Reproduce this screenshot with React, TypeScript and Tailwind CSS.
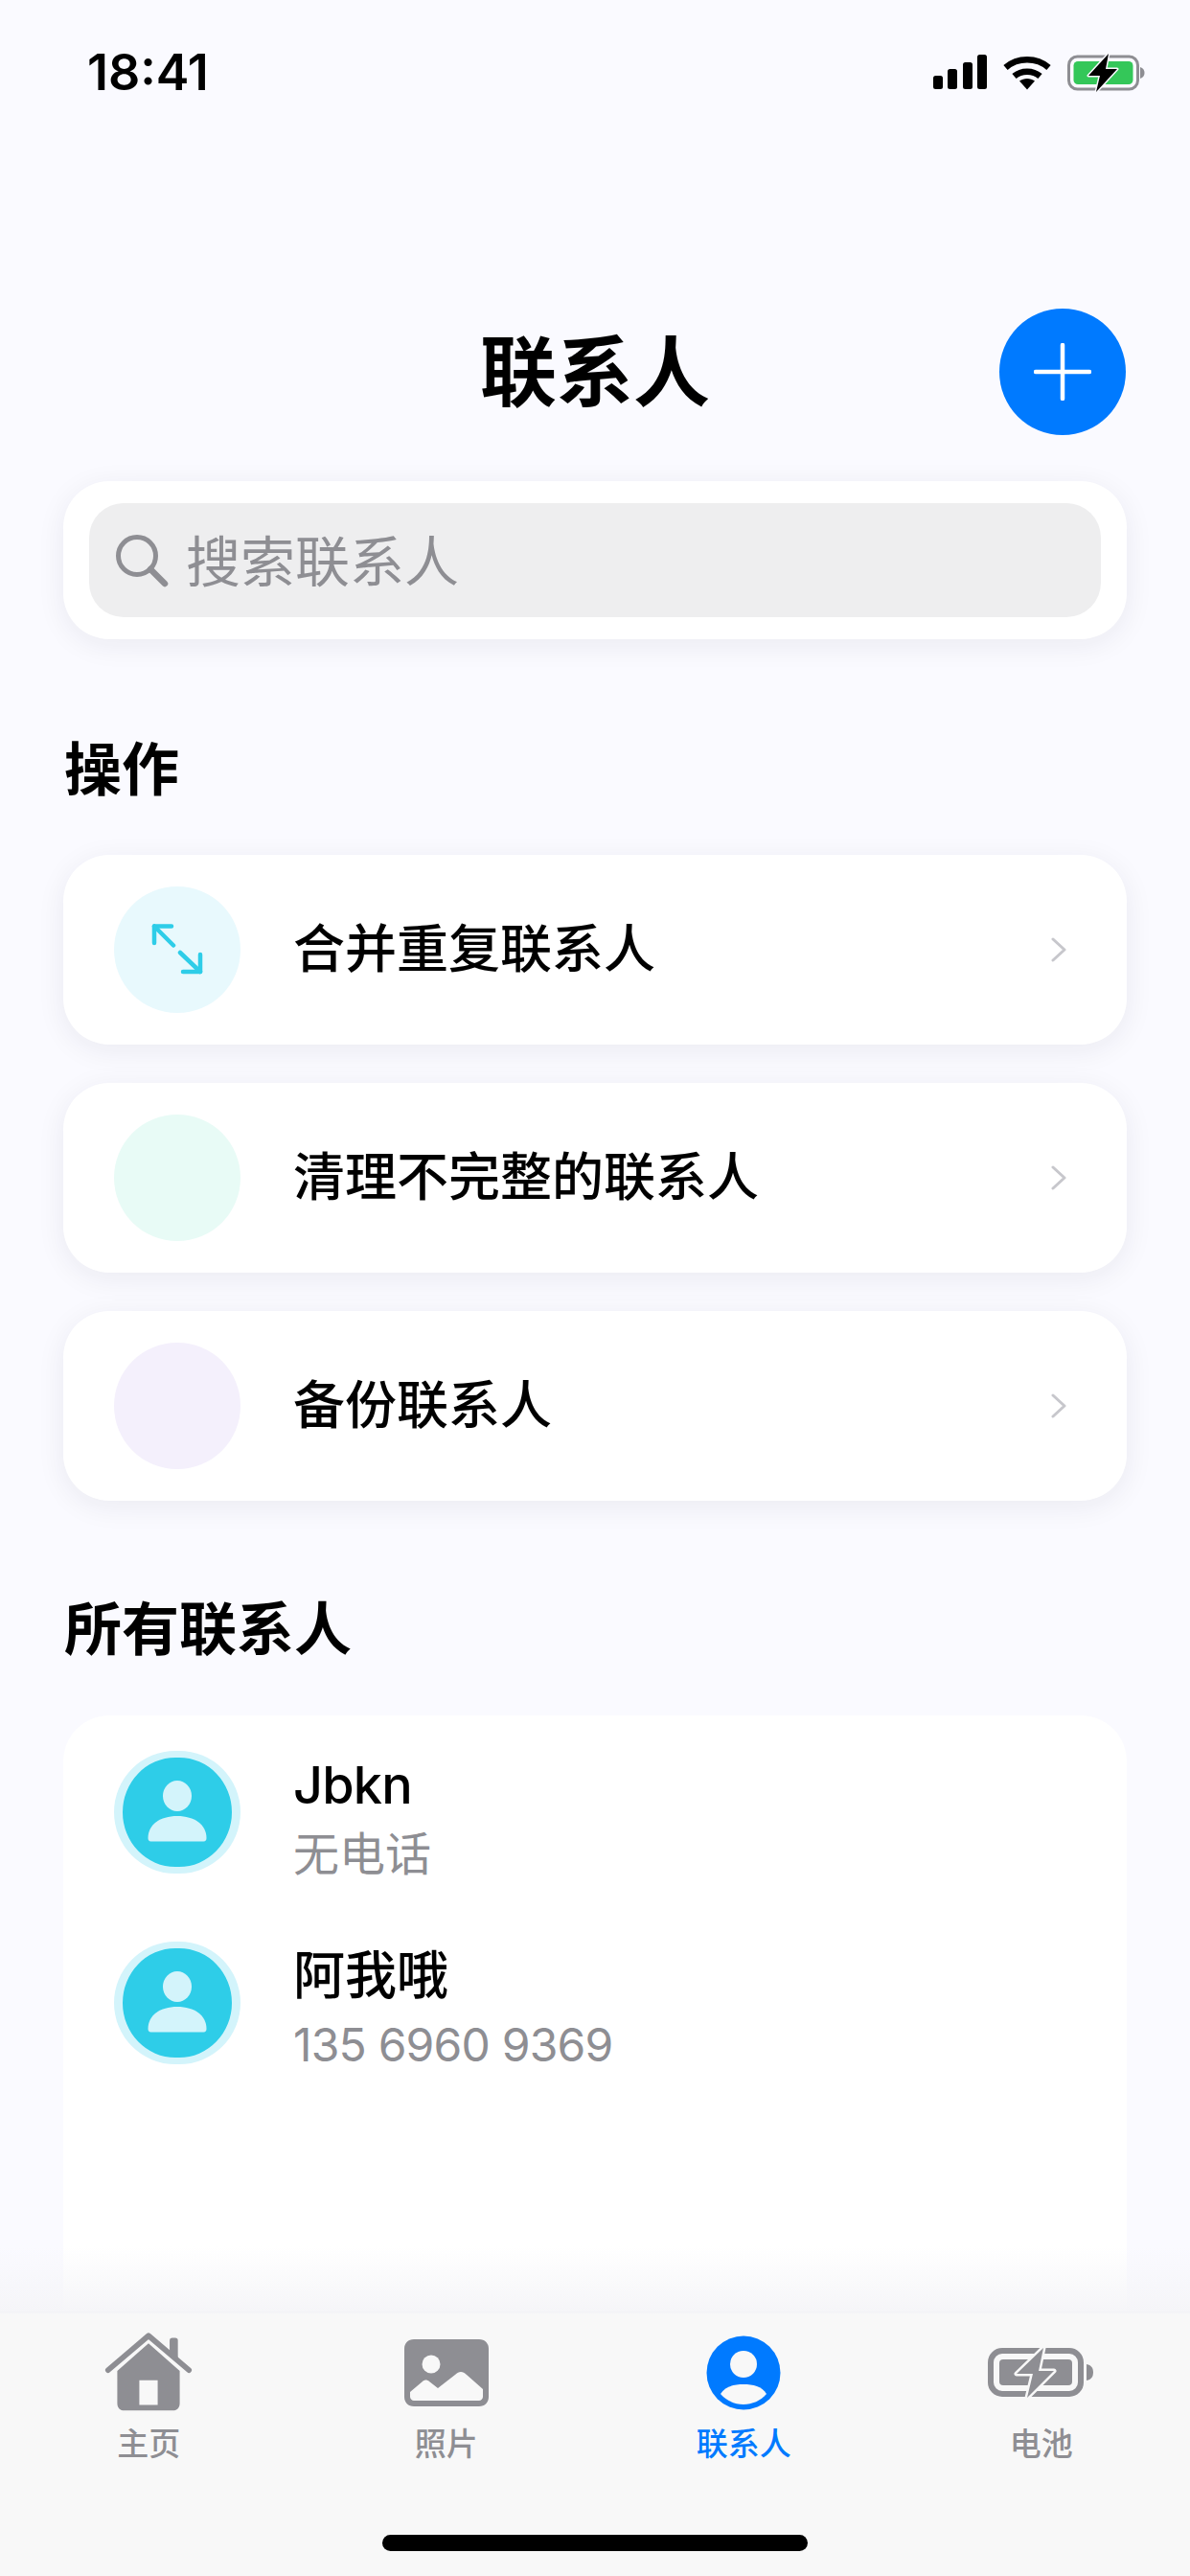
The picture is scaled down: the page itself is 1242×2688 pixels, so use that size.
const font = { fontFamily: 'Inter, "Noto Sans CJK SC", sans-serif' };

function Signal() {
  return (
    <svg width="56" height="38" viewBox="0 0 56 38" fill="#000">
      <rect x="0" y="22" width="10" height="14" rx="2.500" />
      <rect x="15" y="15" width="10" height="21" rx="2.500" />
      <rect x="31" y="8" width="10" height="28" rx="2.500" />
      <rect x="46" y="0" width="10" height="36" rx="2.500" />
    </svg>
  );
}

function Wifi() {
  return (
    <svg width="52" height="38" viewBox="0 0 52 38" fill="none" stroke="#000" strokeWidth="6.500">
      <path d="M3.500 13.500C16 2.500 36 2.500 48.500 13.500" />
      <path d="M12.500 22.500C20 16 32 16 39.500 22.500" />
      <path d="M18 27.500C22.500 24 29.500 24 34 27.500L26 36.500Z" fill="#000" stroke="none" />
    </svg>
  );
}

function StatusBattery() {
  return (
    <svg width="81" height="42" viewBox="0 0 81 42" fill="none">
      <rect x="1.500" y="4" width="72" height="34" rx="9" stroke="#8e8e93" strokeWidth="3" />
      <rect x="6.500" y="9" width="62" height="24" rx="4.500" fill="#34c759" />
      <path d="M76 15C79 16 80.500 18 80.500 21C80.500 24 79 26 76 27Z" fill="#8e8e93" />
      <path d="M43 1L22 24H34L30 41L52 17H40Z" fill="#000" stroke="#fafaff" strokeWidth="3" paintOrder="stroke" strokeLinejoin="round" />
    </svg>
  );
}

function MergeIcon() {
  return (
    <svg width="54" height="54" viewBox="0 0 54 54" fill="none" stroke="#2ecde8" strokeWidth="4.500" strokeLinecap="round" strokeLinejoin="round">
      <path d="M3 20V2.500H21" />
      <path d="M3 2.500L23 22.500" />
      <path d="M51 32V50H33" />
      <path d="M30 30L51 50" />
    </svg>
  );
}

function Chevron() {
  return (
    <svg width="18" height="26" viewBox="0 0 18 26" fill="none" stroke="#c7c7cc" strokeWidth="3" strokeLinecap="round" strokeLinejoin="round">
      <path d="M3 2L15 13L3 24" />
    </svg>
  );
}

function SearchIcon() {
  return (
    <svg width="56" height="56" viewBox="0 0 56 56" fill="none" stroke="#8e8e93" strokeWidth="5" strokeLinecap="round">
      <circle cx="23" cy="23" r="19.500" />
      <path d="M37 37L52 52" strokeWidth="6.500" />
    </svg>
  );
}

function ActionRow({ bg, label, icon }: { bg: string; label: string; icon?: React.ReactNode }) {
  return (
    <div className="flex h-[198px] items-center rounded-[48px] bg-white pl-[53px] pr-[62px] shadow-[0_6px_30px_rgba(30,30,60,0.07)]">
      <div className={`flex h-[132px] w-[132px] shrink-0 items-center justify-center rounded-full ${bg}`}>{icon}</div>
      <div className="ml-[55px] flex-1 text-[54px] font-medium leading-[70px] text-black">{label}</div>
      <Chevron />
    </div>
  );
}

function Avatar() {
  return (
    <div className="flex h-[128px] w-[132px] shrink-0 items-center justify-center rounded-full border-x-[9px] border-y-[7px] border-[#d3f4fb] bg-[#2ecde8]">
      <svg width="62" height="66" viewBox="0 0 62 66" fill="#d3f4fb">
        <ellipse cx="31" cy="16" rx="15" ry="16" />
        <path d="M0.500 60C0.500 46 13 37 31 37C49 37 61.500 46 61.500 60C61.500 62 60.500 63.500 58.500 63.500H3.500C1.500 63.500 0.500 62 0.500 60Z" />
      </svg>
    </div>
  );
}

function ContactRow({ name, sub, nameClass, subClass }: { name: string; sub: string; nameClass: string; subClass?: string }) {
  return (
    <div className="flex h-[199px] items-center pl-[53px]">
      <Avatar />
      <div className="ml-[55px] mt-[12px] flex flex-col">
        <div className={`text-[54px] leading-[76px] text-black ${nameClass}`}>{name}</div>
        <div className={`text-[48px] leading-[68px] text-[#8e8e93] ${subClass ?? ''}`}>{sub}</div>
      </div>
    </div>
  );
}

function HomeIcon() {
  return (
    <svg width="92" height="88" viewBox="0 0 96 88" fill="#8e8e93">
      <path d="M48 12L82 42V77C82 82 79 85 74 85H22C17 85 14 82 14 77V42ZM38 52V79H58V52Z" fillRule="evenodd" />
      <path d="M4 41L48 3.500L92 41" fill="none" stroke="#8e8e93" strokeWidth="6" strokeLinecap="round" strokeLinejoin="round" />
      <path d="M71 24V9C71 7 72 6 74 6H77C79 6 80 7 80 9V31Z" />
    </svg>
  );
}

function PhotoIcon() {
  return (
    <svg width="88" height="70" viewBox="0 0 88 70" fill="#8e8e93">
      <path
        fillRule="evenodd"
        d="M10 0H78C84 0 88 4 88 10V60C88 66 84 70 78 70H10C4 70 0 66 0 60V10C0 4 4 0 10 0ZM6 55V60C6 62 8 64 10 64H78C80 64 82 62 82 60V52L65 37C61 33 57 33 53 37L35 51L26 44C24 42 21 42 19 44Z"
      />
      <circle cx="28" cy="26" r="9.500" fill="#f8f8f8" />
    </svg>
  );
}

function PersonIcon() {
  return (
    <svg width="78" height="78" viewBox="0 0 78 78">
      <circle cx="39" cy="39" r="38.500" fill="#007aff" />
      <circle cx="39" cy="30" r="14" fill="#f8f8f8" />
      <path d="M15 61C20 53 29 51 39 51C49 51 58 53 63 61C57 68 48 72 39 72C30 72 21 68 15 61Z" fill="#f8f8f8" />
    </svg>
  );
}

function TabBatteryIcon() {
  return (
    <svg width="112" height="54" viewBox="0 0 112 54" fill="none">
      <rect x="3" y="4" width="94" height="45" rx="12" stroke="#8e8e93" strokeWidth="6" />
      <rect x="12" y="13" width="76" height="27" rx="4" fill="#8e8e93" />
      <path d="M103 18C108 19 110 22 110 26.500C110 31 108 34 103 35Z" fill="#8e8e93" />
      <path d="M58 1L30 28H47L41 53L69 25H53Z" fill="#8e8e93" stroke="#f8f8f8" strokeWidth="5" paintOrder="stroke" strokeLinejoin="round" />
    </svg>
  );
}

function Tab({ label, icon, active }: { label: string; icon: React.ReactNode; active?: boolean }) {
  return (
    <div className="flex flex-col items-center">
      <div className="flex h-[96px] items-center justify-center">{icon}</div>
      <div className={`mt-[4px] text-[33px] font-medium leading-[44px] ${active ? 'text-[#007aff]' : 'text-[#8e8e93]'}`}>{label}</div>
    </div>
  );
}

export default function App() {
  return (
    <div className="flex h-[2688px] w-[1242px] flex-col overflow-hidden bg-[#fafaff]" style={font}>
      <div className="flex h-[150px] shrink-0 items-center justify-between pl-[91px] pr-[47px] pt-[2px]">
        <div className="text-[52px] font-semibold leading-none text-black">18:41</div>
        <div className="flex items-center gap-[16px]">
          <Signal />
          <Wifi />
          <StatusBattery />
        </div>
      </div>

      <div className="relative mt-[172px] flex h-[132px] shrink-0 items-center justify-center">
        <div className="text-[80px] font-bold leading-none text-black">联系人</div>
        <div className="absolute right-[67px] top-0 flex h-[132px] w-[132px] items-center justify-center rounded-full bg-[#007aff]">
          <svg width="60" height="60" viewBox="0 0 60 60" stroke="#fff" strokeWidth="4.500" strokeLinecap="round">
            <path d="M30 2V58M2 30H58" />
          </svg>
        </div>
      </div>

      <div className="mx-[66px] mt-[48px] shrink-0 rounded-[48px] bg-white px-[27px] py-[23px] shadow-[0_6px_30px_rgba(30,30,60,0.07)]">
        <div className="flex h-[119px] items-center rounded-[36px] bg-[#eeeeef] pl-[27px]">
          <SearchIcon />
          <span className="ml-[18px] mt-[4px] text-[57px] leading-none text-[#8e8e93]">搜索联系人</span>
        </div>
      </div>

      <div className="ml-[67px] mt-[97px] shrink-0 text-[60px] font-semibold leading-[78px] text-black">操作</div>

      <div className="mx-[66px] mt-[50px] flex shrink-0 flex-col gap-[40px]">
        <ActionRow bg="bg-[#e8f9fd]" label="合并重复联系人" icon={<MergeIcon />} />
        <ActionRow bg="bg-[#e8fbf6]" label="清理不完整的联系人" />
        <ActionRow bg="bg-[#f4f0fc]" label="备份联系人" />
      </div>

      <div className="ml-[67px] mt-[95px] shrink-0 text-[60px] font-semibold leading-[78px] text-black">所有联系人</div>

      <div className="mx-[66px] mt-[51px] min-h-0 flex-1 rounded-t-[48px] bg-white pt-[1px]">
        <ContactRow name="Jbkn" sub="无电话" nameClass="font-medium tracking-[-0.8px]" />
        <ContactRow name="阿我哦" sub="135 6960 9369" nameClass="font-medium" subClass="tracking-[-0.8px]" />
      </div>

      <div className="relative h-[276px] shrink-0 border-t-2 border-[#b2b2b2] bg-[#f8f8f8]">
        <div className="pointer-events-none absolute inset-x-0 bottom-full h-[70px] bg-gradient-to-b from-[#f5f5f800] to-[#f5f5f8]" />
        <div className="grid grid-cols-4 pt-[14px]">
          <Tab label="主页" icon={<HomeIcon />} />
          <Tab label="照片" icon={<PhotoIcon />} />
          <Tab label="联系人" icon={<PersonIcon />} active />
          <Tab label="电池" icon={<TabBatteryIcon />} />
        </div>
        <div className="absolute bottom-[26px] left-1/2 h-[17px] w-[444px] -translate-x-1/2 rounded-full bg-black" />
      </div>
    </div>
  );
}
